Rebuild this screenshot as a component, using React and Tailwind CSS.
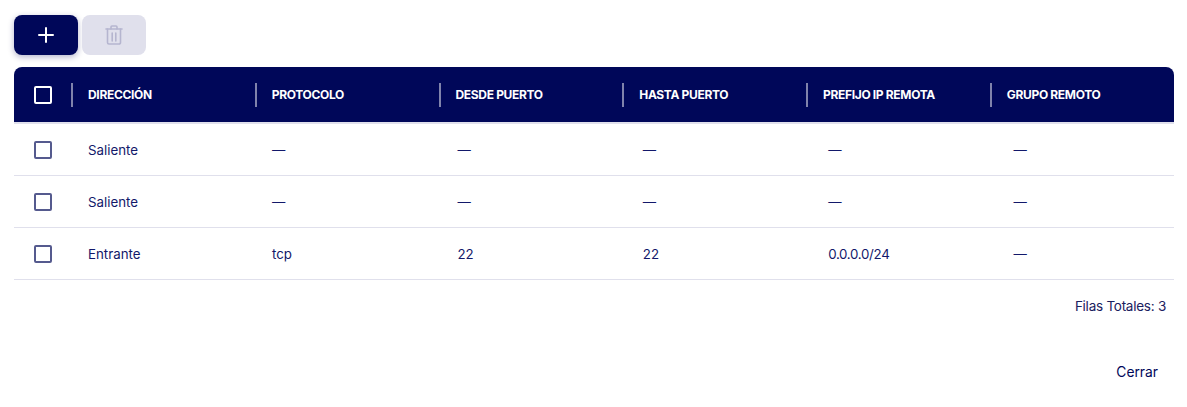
import { Plus } from 'lucide-react'

const headers = ['Dirección', 'Protocolo', 'Desde puerto', 'Hasta puerto', 'Prefijo IP remota', 'Grupo remoto']

const rows = [
    ['Saliente', '—', '—', '—', '—', '—'],
    ['Saliente', '—', '—', '—', '—', '—'],
    ['Entrante', 'tcp', '22', '22', '0.0.0.0/24', '—'],
]

function TrashIcon() {
    return (
        <svg width="18" height="20" viewBox="0 0 18 20" fill="none" stroke="#b5b5cf" strokeWidth="1.6" strokeLinecap="round">
            <path d="M1 4h16" />
            <path d="M6 4V2a1 1 0 0 1 1-1h4a1 1 0 0 1 1 1v2" />
            <path d="M2.5 4v13.5a1.5 1.5 0 0 0 1.5 1.5h10a1.5 1.5 0 0 0 1.5-1.5V4" />
            <path d="M7.2 8v8" />
            <path d="M10.8 8v8" />
        </svg>
    )
}

export default function App() {
    return (
        <div className="w-[1187px] h-[407px] bg-white pl-[14px] pr-[13px] pt-[15px] text-[#000759] font-['Inter',sans-serif] overflow-hidden">
            <div className="flex gap-1">
                <button className="w-16 h-10 rounded-lg bg-[#000759] flex items-center justify-center shadow-[0_2px_6px_rgba(0,7,89,0.3)]">
                    <Plus size={24} color="#ffffff" strokeWidth={2} />
                </button>
                <button className="w-16 h-10 rounded-lg bg-[#e0e0ec] flex items-center justify-center">
                    <TrashIcon />
                </button>
            </div>

            <div className="mt-3 h-[57px] rounded-t-lg bg-[#000759] border-b-2 border-[#e0e0ec] flex items-center overflow-hidden">
                <div className="w-[57px] shrink-0 pl-5">
                    <span className="block w-[18px] h-[18px] rounded-[2px] border-2 border-white" />
                </div>
                {headers.map((h) => (
                    <div key={h} className="w-[183.75px] shrink-0 h-6 flex items-center border-l-2 border-[#8083ac] pl-[15px] text-xs font-bold uppercase text-white tracking-[-0.33px]">
                        {h}
                    </div>
                ))}
                <div className="ml-auto h-6 w-[1px] bg-[#8083ac]" />
            </div>

            {rows.map((row, i) => (
                <div key={i} className="h-[52px] border-b border-[#e0e0ec] flex items-center text-[13.3px] text-[#12186a] overflow-hidden">
                    <div className="w-[74px] shrink-0 pl-5">
                        <span className="block w-[18px] h-[18px] rounded-[2px] border-2 border-[#555a8e]" />
                    </div>
                    {row.map((cell, j) => (
                        <div key={j} className={(j === 0 ? 'w-[184px]' : 'w-[185.4px]') + ' shrink-0 pt-0.5' + (cell === '0.0.0.0/24' ? ' tracking-[-0.3px]' : '')}>{cell}</div>
                    ))}
                </div>
            ))}

            <div className="mt-[18px] pr-2 text-right text-[13.5px] leading-[17px] text-[#1a2060] tracking-[-0.25px]">Filas Totales: 3</div>

            <div className="mt-[49px] pr-4 text-right text-[13.8px] leading-[17px]">Cerrar</div>
        </div>
    )
}
